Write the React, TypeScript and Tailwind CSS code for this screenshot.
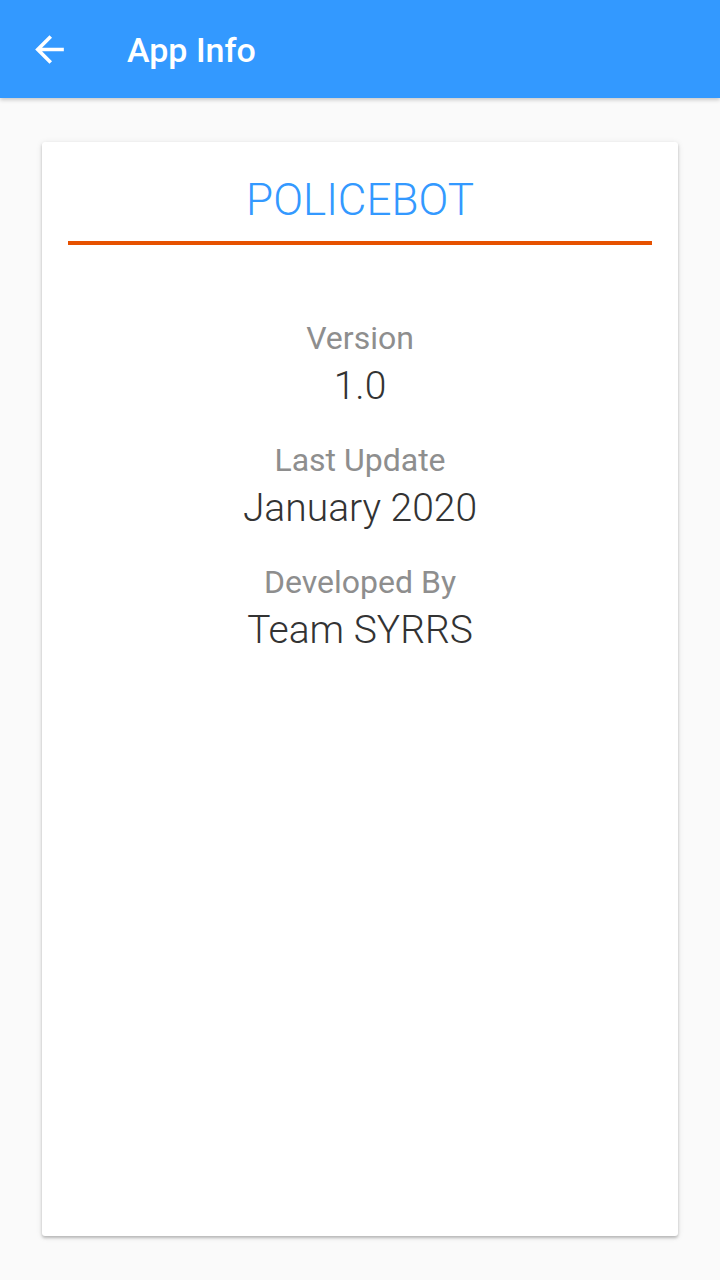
export default function App() {
  const rows = [
    { label: "Version", value: "1.0" },
    { label: "Last Update", value: "January 2020" },
    { label: "Developed By", value: "Team SYRRS" },
  ];

  return (
    <div className="flex h-[1280px] w-[720px] flex-col bg-[#fafafa] font-['Roboto',sans-serif]">
      {/* App bar */}
      <header className="relative z-10 flex h-[98px] shrink-0 items-center bg-[#3399ff] shadow-[0_2px_4px_rgba(0,0,0,0.2)]">
        <button className="ml-[28px] flex h-[43px] w-[43px] items-center justify-center text-white">
          <svg viewBox="0 0 24 24" className="h-[43px] w-[43px]" fill="currentColor">
            <path d="M20 11H7.83l5.59-5.59L12 4l-8 8 8 8 1.41-1.41L7.83 13H20v-2z" />
          </svg>
        </button>
        <h1 className="ml-[56px] pt-[3px] text-[34px] font-medium text-white">App Info</h1>
      </header>

      {/* Content */}
      <main className="flex flex-1 flex-col px-[42px] pt-[44px] pb-[44px]">
        <div className="flex flex-1 flex-col rounded-[3px] bg-white px-[26px] shadow-[0_2px_3px_rgba(0,0,0,0.22),0_1px_6px_rgba(0,0,0,0.1)]">
          <h2 className="pt-[30px] text-center text-[44px] leading-[56px] font-light text-[#3399ff]">
            POLICEBOT
          </h2>
          <div className="mt-[13px] h-[4px] bg-[#e65100]" />

          <div className="mt-[73px] flex flex-col items-center gap-[30px]">
            {rows.map((row) => (
              <div key={row.label} className="flex flex-col items-center">
                <span className="text-[32px] leading-[40px] text-[#8e8e8e]">{row.label}</span>
                <span className="mt-[4px] text-[39px] leading-[48px] font-light text-[#333333]">
                  {row.value}
                </span>
              </div>
            ))}
          </div>
        </div>
      </main>
    </div>
  );
}
